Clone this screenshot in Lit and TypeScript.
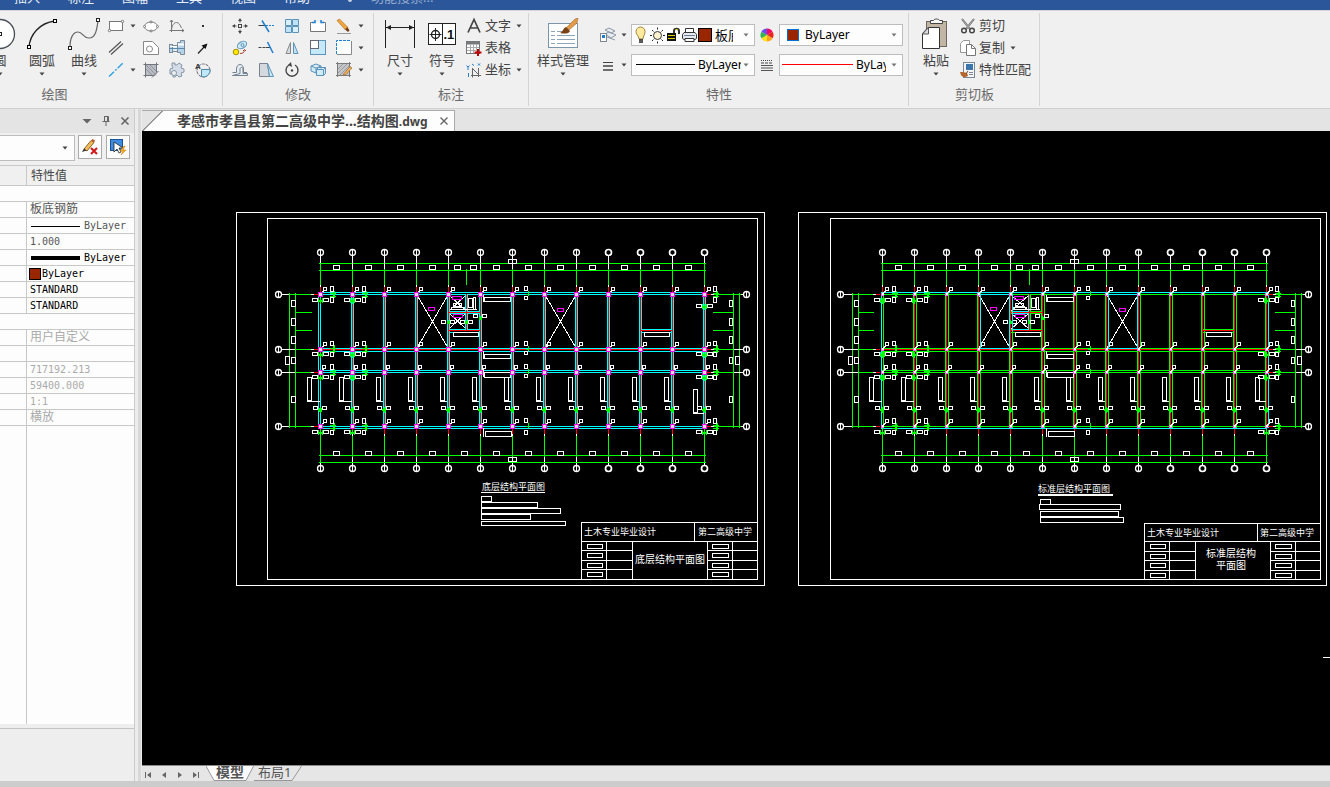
import { LitElement, html, svg, css, nothing } from "lit";
import { customElement } from "lit/decorators.js";

/* ---------- icons: 18x18 for small tools, 32x32 for large ones ---------- */

const small = (body: unknown) => html`<svg width="18" height="18" viewBox="0 0 18 18" fill="none" aria-hidden="true">${body}</svg>`;
const large = (body: unknown) => html`<svg width="32" height="32" viewBox="0 0 32 32" fill="none" aria-hidden="true">${body}</svg>`;
const caret = html`<svg class="caret" width="6" height="4" viewBox="0 0 6 4" aria-hidden="true"><path d="M.5 .5h5l-2.5 3z" fill="currentColor" /></svg>`;

const ink = "#4a4f57";
const blue = "#1f7fd0";
const pale = "#cfeaf8";
const steel = "#5d93b8";

const icons = {
  circle: large(svg`<circle cx="16" cy="16" r="14.500" stroke=${ink} stroke-width="1.300" fill="#fff"/><rect x="14.500" y="14.500" width="3" height="3" fill="#fff" stroke="#222"/>`),
  arc: large(svg`<path d="M3 29C4 17 13 5 29 3" stroke="#222" stroke-width="1.300"/><rect x="1.500" y="27.500" width="3" height="3" fill="#fff" stroke="#000"/><rect x="27.500" y="1.500" width="3" height="3" fill="#fff" stroke="#000"/>`),
  spline: large(svg`<path d="M2 29C2 20 5 14 10 14C15 14 15 20 21 20C28 20 29 10 30 3" stroke="#666" stroke-width="1.200"/><rect x=".5" y="28.500" width="3" height="3" fill="#fff" stroke="#222"/><rect x="28.500" y=".5" width="3" height="3" fill="#fff" stroke="#222"/>`),
  rect: small(svg`<rect x="2.500" y="4.500" width="13" height="9" fill="#fff" stroke="#777"/><circle cx="15.500" cy="4.500" r="1.200" fill="#fff" stroke="#777"/><circle cx="2.500" cy="13.500" r="1.200" fill="#fff" stroke="#777"/>`),
  ellipse: small(svg`<ellipse cx="9" cy="9.500" rx="6.500" ry="4.500" fill="#fff" stroke="#777"/><circle cx="2.500" cy="9.500" r="1" fill="#fff" stroke="#777"/><circle cx="15.500" cy="9.500" r="1" fill="#fff" stroke="#777"/><circle cx="9" cy="5" r="1" fill="#fff" stroke="#777"/><circle cx="9" cy="14" r="1" fill="#fff" stroke="#777"/>`),
  graph: small(svg`<path d="M3.500 3v12M1.500 13.500H16M2 5l1.500-2L5 5M14 12l2 1.500-2 1.500M3.500 13C4 8 6 5.500 8.500 5.500S12 8 13.500 11" stroke="#777"/>`),
  point: small(svg`<rect x="8" y="8" width="2" height="2" fill="#333"/>`),
  parallel: small(svg`<path d="M2 13.500L14 2.500M4 15.500L16 4.500" stroke="#555" stroke-width="1.200"/>`),
  contour: small(svg`<path d="M1.500 2.500h9l6 6v7h-15z" fill="#fff" stroke="#888"/><circle cx="7.500" cy="10" r="3" stroke="#888"/>`),
  shaft: small(svg`<rect x="1.500" y="5.500" width="3" height="8" fill="#b9d8ee" stroke="#7d8b98"/><rect x="4.500" y="6.500" width="5" height="6" fill="#dcebf6" stroke="#7d8b98"/><path d="M9.500 3.500h3v-2h4v14h-4v-2h-3z" fill="#b4d4ec" stroke="#7d8b98"/><path d="M10 5.500h6" stroke="#fff" stroke-width="2"/><path d="M2 7.500h7" stroke="#fff"/><path d="M1 9.500h16" stroke="#5c88aa"/>`),
  leader: small(svg`<path d="M4 14.500L12 6" stroke="#222" stroke-width="1.200"/><path d="M13.500 4.500L11.500 10 7.500 6.500z" fill="#111"/>`),
  dashline: small(svg`<path d="M2 15.500L16 2" stroke="#2d9fdc" stroke-width="1.400" stroke-dasharray="7 1.500 2 1.500"/>`),
  hatch: small(svg`<rect x="3.500" y="3.500" width="11" height="11" fill="#b9bdc3"/><path d="M1.500 3.500h15M1.500 14.500h11M3.500 1.500v15M14.500 1.500v10M10 16.500l6.500-6.500" stroke="#6f757d"/><path d="M4 4l9 9M8 4l6 6M4 8l6 6" stroke="#8f959d"/>`),
  gear: small(svg`<path d="M4 2h3v2h2l2-2 3 2-1 3 3 1v3l-3 1 1 3-3 1-2-2-2 2H5v-3H2V8l3-1-1-2z" fill="#d3dce8" stroke="#8796a5"/><circle cx="6" cy="12" r="2.500" fill="#f0f0f0" stroke="#8796a5"/>`),
  region: small(svg`<circle cx="9.500" cy="9.500" r="6.500" stroke="#667" stroke-dasharray="3 1"/><path d="M7.500 8.500h8.500a6.500 6.500 0 0 1-8.500 7z" fill="#bfe8fb" stroke="#4b86a8"/><text x="1" y="8" font-size="8" font-weight="700" font-family="Liberation Sans, sans-serif" fill="#333">A</text>`),
  move: small(svg`<path d="M9 1.500v4M9 12.500v4M1.500 9h4M12.500 9h4" stroke="#444"/><path d="M7 4l2-2.500L11 4zM7 14l2 2.500 2-2.500zM4 7L1.500 9 4 11zM14 7l2.500 2-2.500 2z" fill="#444"/><rect x="7.500" y="7.500" width="3" height="3" stroke="#444"/>`),
  trim: small(svg`<path d="M1.500 8.500H9" stroke="#444"/><path d="M9 8.500h8" stroke="${blue}" stroke-dasharray="2 1"/><path d="M5 3.500L12 15" stroke="${blue}" stroke-width="1.500"/>`),
  array: small(svg`<path d="M2.500 2.500h6v6h-6zM9.500 9.500h6v6h-6z" fill="#d9f0fb" stroke=${steel}/><path d="M9.500 2.500h6v6h-6zM2.500 9.500h6v6h-6z" fill="#bfe3f6" stroke=${steel}/>`),
  breakEdge: small(svg`<path d="M4.500 5.500h-3v9h15v-9h-3" fill="#fff" stroke="#777"/><path d="M3 5.500h3V3M15 5.500h-3V3" stroke=${blue} stroke-width="1.500"/>`),
  erase: small(svg`<path d="M2 16.500h14" stroke="#999"/><path d="M2 3.500L4.500 2l8 8-2.500 2.500z" fill="#f0a63c" stroke="#a9681a" stroke-width=".6"/><path d="M10 12.500l2.500-2.500 2 3.500-1.500 1.500z" fill="#7a3d16"/>`),
  copyTo: small(svg`<ellipse cx="11" cy="6" rx="5" ry="3.200" transform="rotate(-30 11 6)" fill=${pale} stroke=${steel}/><circle cx="11.500" cy="6" r="1.500" stroke=${steel}/><circle cx="5" cy="13" r="2.800" fill="#ffe600" stroke="#a89300"/><path d="M9 14.500c3 0 4-1 4.500-3M12 12l1.500-1.500L15 12" stroke="#b03a2e"/>`),
  extend: small(svg`<path d="M1.500 8.500H9" stroke="#444" stroke-dasharray="3 1"/><path d="M9 8.500h4" stroke="#444"/><path d="M10.500 3L16 14" stroke=${blue} stroke-width="1.500"/>`),
  mirror: small(svg`<path d="M7.500 3.500v11H3z" fill="#d7dbe0" stroke="#888"/><path d="M10.500 3.500v11H15z" fill="#bfe3f6" stroke=${steel}/>`),
  scale: small(svg`<rect x="1.500" y="1.500" width="15" height="14" fill="#c6e9fa" stroke=${steel}/><rect x="1.500" y="1.500" width="8" height="8" fill="#fff" stroke="#667"/>`),
  dashedRect: small(svg`<rect x="2" y="2" width="14" height="13" fill="#fff"/><path d="M1.500 15V1.500H16" stroke=${blue} stroke-dasharray="3 1"/><path d="M16.500 2v13.500H2" stroke="#888"/>`),
  offset: small(svg`<path d="M1.500 11.500h4V8c0-6 7-6 7 0v3.500h3.500M1.500 14.500h15v-2h-4.500V8c0-2-3-2-3 0v4.500z" fill="#e4edf4" stroke="#73818f"/>`),
  chamfer: small(svg`<path d="M2.500 2.500h8l2 13h-10z" fill="#d5d9de" stroke="#7b838c"/><path d="M10.500 2.500l6 13h-4z" fill="#c6e9fa" stroke=${steel}/>`),
  rotate: small(svg`<path d="M6 4A6 6 0 1 0 12 4" stroke="#444" stroke-width="1.400"/><path d="M8 1l-3 3 4 2z" fill="#444"/><circle cx="9" cy="9.500" r="1.200" fill="#444"/>`),
  blocks: small(svg`<path d="M2 5l5-2 5 2v5l-5 2-5-2zM2 5l5 2 5-2M7 7v5" fill=${pale} stroke=${steel}/><path d="M7.500 8.500l2-2h7v6l-2 2h-7zM7.500 8.500h7l2-2M14.500 8.500v6" fill=${pale} stroke=${steel}/>`),
  hatchEdit: small(svg`<rect x="2.500" y="2.500" width="12" height="12" fill="#c4c6c9"/><path d="M1 2.500h15M1 14.500h15M2.500 1v15M14.500 1v15" stroke="#7a7a7a"/><path d="M3 8l5-5M3 12l9-9M5 14l9-9" stroke="#9a9a9a"/><path d="M9 12.500l6-7 2 1.500-6 6.500-3 1z" fill="#f2b25a" stroke="#8a5a22" stroke-width=".6"/>`),
  dimension: large(svg`<path d="M1.500 2v28M30.500 2v28M2 9.500h28" stroke="#222"/><path d="M2 9.500l5-2.500v5zM30 9.500l-5-2.500v5z" fill="#222"/>`),
  symbol: large(svg`<rect x="2.500" y="5.500" width="27" height="21" fill="#fff" stroke="#222"/><path d="M16.500 5.500v21M3.500 16.500h12M9.500 10v13" stroke="#222"/><circle cx="9.500" cy="16.500" r="4" stroke="#222" stroke-width="1.400"/><text x="17.500" y="21" font-size="13" font-weight="700" font-family="Liberation Sans, sans-serif" fill="#111">.1</text>`),
  letter: small(svg`<path d="M3 15.500L9 2.500l6 13M5.500 11h7" stroke="#444" stroke-width="1.700"/>`),
  grid: small(svg`<rect x="1.500" y="2.500" width="13" height="12" fill="#fff" stroke="#777"/><rect x="1.500" y="2.500" width="13" height="3" fill="#77797c"/><path d="M2 8.500h12M2 11.500h12M5.500 5v9M8.500 5v9M11.500 5v9" stroke="#aaa"/><path d="M13 10v7M9.500 13.500h7" stroke="#c00000" stroke-width="2"/>`),
  coords: small(svg`<path d="M7.500 7v9.500M6 14.500h10M8 8l5 5M13.500 7v9" stroke="#666"/><path d="M3 6v3M1.500 4.500L3 6l1.500-1.500M3.500 12v4M7 3l2 1.500M13 2.500l2 2M15 2.500l-2 2" stroke=${blue}/>`),
  styles: large(svg`<rect x="1.500" y="5.500" width="29" height="24" fill="#fff" stroke="#7b95ab"/><path d="M4 13.500h4M10 13.500h8M4 17.500h4M10 17.500h18M4 21.500h4M10 21.500h18M4 25.500h4M10 25.500h18" stroke="#8fa3bb"/><path d="M28 1l3-1-1 5-8 7-3-2z" fill="#e09a4a" stroke="#9a5b1c" stroke-width=".5"/><path d="M19 9l4 4c-1 3-6 3-10 2 3-1 3-5 6-6z" fill="#7b4218"/>`),
  layers: small(svg`<path d="M6 4l4-2 6 3-4 2zM6 8l4-2 7 3-5 3zM8 11l8 3" fill="#e8ecf0" stroke="#8d97a2"/><rect x="1.500" y="7.500" width="6" height="8" fill="#fff" stroke="#7d8894"/><rect x="3" y="9" width="3" height="3" fill=${blue}/>`),
  weights: small(svg`<path d="M4 6.500h10" stroke="#444"/><path d="M4 10h10M4 14h10" stroke="#444" stroke-width="1.500"/>`),
  wheel: small(svg`<path d="M9 9V2.500a6.500 6.500 0 0 1 5.600 3.200z" fill="#f06"/><path d="M9 9l5.600-3.300a6.500 6.500 0 0 1 0 6.600z" fill="#e8261c"/><path d="M9 9l5.600 3.300A6.500 6.500 0 0 1 9 15.500z" fill="#ffa51f"/><path d="M9 9v6.500a6.500 6.500 0 0 1-5.600-3.200z" fill="#ffe11a"/><path d="M9 9l-5.600 3.300a6.500 6.500 0 0 1 0-6.600z" fill="#34b54a"/><path d="M9 9L3.400 5.700A6.500 6.500 0 0 1 9 2.500z" fill="#6a4be8"/>`),
  lineTypes: small(svg`<path d="M3 4.500h12" stroke="#444" stroke-dasharray="1 1"/><path d="M3 7h12" stroke="#444" stroke-dasharray="3 1"/><path d="M3 9.500h12M3 12h12M3 14.500h12" stroke="#555"/>`),
  paste: large(svg`<rect x="6.500" y="3.500" width="20" height="25" fill="#c1b5a6" stroke="#6f675e"/><path d="M10.500 5.500v-3h3c1-2 5-2 6 0h3v3z" fill="#f8f8f8" stroke="#444"/><path d="M8 9.500h11.500v21h-17v-15z" fill="#fff" stroke="#333"/><path d="M8.500 9.500v6.500h-6z" fill="#d9dde2" stroke="#555"/>`),
  cut: small(svg`<path d="M3 2l8 10M15 2L7 12" stroke="#555" stroke-width="2"/><path d="M3 2l8 10M15 2L7 12" stroke="#ddd" stroke-width=".7"/><circle cx="5" cy="13.500" r="2.300" stroke="#444" stroke-width="1.500"/><circle cx="13" cy="13.500" r="2.300" stroke="#444" stroke-width="1.500"/>`),
  copy: small(svg`<path d="M4.500 1.500h6v12h-9v-9z" fill="#fff" stroke="#999"/><path d="M7.500 5.500h5l4 4v7h-9z" fill="#fff" stroke="#777"/><path d="M12.500 5.500v4h4" stroke="#777"/>`),
  match: small(svg`<rect x="4.500" y="1.500" width="11" height="15" fill="#f4f6f8" stroke="#7b8894"/><rect x="7" y="3" width="7" height="6" fill="#3d76ad"/><path d="M10 11.500h4M10 13.500h4" stroke="#7b8894"/><path d="M1 11c3 0 4 0 7 1l1 3c-3 2-6 1-7-1z" fill="#b5672b"/><path d="M7 13l2-3" stroke="#7b4218"/>`),
  bulb: html`<svg width="15" height="18" viewBox="0 0 15 18" fill="none"><path d="M5 13c0-3-3-4-3-7.500A4.500 4.500 0 0 1 11 5.500C11 9 9 10 9 13z" fill="#ffeaa0" stroke="#9c8440"/><path d="M5 14h4M5 16h4" stroke="#222" stroke-width="1.500"/></svg>`,
  sun: html`<svg width="17" height="18" viewBox="0 0 17 18" fill="none"><circle cx="8.500" cy="9.500" r="4" fill="#fff3cf" stroke="#333"/><path d="M8.500 1.500v2M8.500 15.500v2M1 9.500h2M14 9.500h2M3 4l1.500 1.500M12.500 13.500L14 15M14 4l-1.500 1.500M4.500 13.500L3 15" stroke="#222"/></svg>`,
  lock: html`<svg width="15" height="18" viewBox="0 0 15 18" fill="none"><path d="M8 8V5c0-3 5-3 5 0v3" stroke="#333" stroke-width="2"/><path d="M9.500 3.500h2" stroke="#f2e600"/><rect x="1" y="7" width="9" height="8" fill="#111"/><path d="M2 9.500h7M2 12.500h7" stroke="#d9cf00"/></svg>`,
  printer: html`<svg width="17" height="18" viewBox="0 0 17 18" fill="none"><path d="M4.500 7V2.500h8V7" fill="#fff" stroke="#333"/><path d="M3 6.500h11l1.500 2v4l-1.500 1H3l-1.500-1v-4z" fill="#e6eaf0" stroke="#333"/><path d="M4 12.500h9v3H4z" fill="#fff" stroke="#333"/><path d="M3 9.500h11" stroke="#6d7f95"/></svg>`,
};

/* ---------- floor plan drawing ---------- */

type Ink = "diag" | "cyan" | "green" | "red" | "magenta" | "mark" | "white";
const order: Ink[] = ["diag", "cyan", "green", "red", "magenta", "mark", "white"];
const colours: Record<Ink, string> = { diag: "#ffffff", cyan: "#00ffff", green: "#00ff00", red: "#ff0000", magenta: "#ff00ff", mark: "#00ff00", white: "#ffffff" };

class Pen {
  paths: Record<Ink, string> = { diag: "", cyan: "", green: "", red: "", magenta: "", mark: "", white: "" };
  h(c: Ink, x1: number, x2: number, y: number) { this.paths[c] += `M${x1} ${y + 0.5}H${x2 + 1}`; }
  v(c: Ink, x: number, y1: number, y2: number) { this.paths[c] += `M${x + 0.5} ${y1}V${y2 + 1}`; }
  box(c: Ink, x1: number, y1: number, x2: number, y2: number) { this.paths[c] += `M${x1 + 0.5} ${y1 + 0.5}H${x2 + 0.5}V${y2 + 0.5}H${x1 + 0.5}Z`; }
  cross(x1: number, y1: number, x2: number, y2: number) { this.paths.diag += `M${x1} ${y1}L${x2} ${y2}M${x2} ${y1}L${x1} ${y2}`; }
  line(x1: number, y1: number, x2: number, y2: number) { this.paths.white += `M${x1} ${y1}L${x2} ${y2}`; }
}

const rowsY = [294, 349, 372, 426];

function plan(x0: number, ground: boolean) {
  const p = new Pen();
  const col = (i: number) => x0 + 32 * i;
  const end = col(12);
  const wall: Ink = ground ? "cyan" : "green";
  const left = ground ? x0 : x0 + 1;

  // sheet frames
  p.box("white", x0 - 84, 212, end + 60, 585);
  p.box("white", ground ? x0 - 53 : x0 - 52, 218, end + (ground ? 53 : 54), 579);

  // walls along the rows
  p.h("cyan", x0 - 1, end + 1, 292);
  p.h(wall, x0 - 1, end, 294);
  p.h(wall, x0, end, 348);
  p.h("red", x0, end, 349);
  p.h(wall, x0, end, 351);
  p.h(wall, x0, end, 370);
  p.h(wall, x0, end, 372);
  p.h(wall, x0, end, 426);
  p.h("cyan", x0, end, 428);

  // walls along the columns
  for (let i = 0; i <= 12; i++) {
    const c = col(i);
    if (i === 0) {
      p.v("cyan", ground ? c - 2 : c - 1, 293, 428);
      p.v(wall, ground ? c : c + 1, 293, 428);
    } else {
      p.v(wall, c - 1, 293, 427);
      p.v(!ground && i === 12 ? "cyan" : wall, ground ? c + 1 : c + 2, 293, 427);
      p.v("red", c, 293, 427);
    }
  }

  // top and bottom dimension chains
  for (const y of [263, 270, 455, 462]) p.h("mark", x0 - 1, end + 1, y);
  for (let i = 0; i <= 12; i++) {
    const c = col(i);
    const edge = i === 0 || i === 12;
    p.v("white", c, 255, edge ? 262 : 268);
    p.v("mark", c, edge ? 263 : 269, 284);
    p.v("white", c, 285, 286);
    p.v("red", c, 287, 291);
    p.v(edge ? "mark" : "red", c, 429, 433);
    if (!edge) p.v("white", c, 434, 435);
    p.v("mark", c, 436, 456);
    p.v(edge ? "mark" : "white", c, 457, 461);
    p.v("white", c, 463, 465);
    if (i < 12) {
      if (i === 4) {
        p.box("white", c + 6, 265, c + 12, 269);
        p.box("white", c + 22, 265, c + 28, 269);
        p.v("mark", c + (ground ? 18 : 19), 269, 284);
      } else p.box("white", c + 13, 265, c + 19, 269);
      p.box("white", c + 13, 451, c + 19, 455);
    }
  }
  p.box("white", col(6) - 4, 259, col(6) + 4, 263);
  p.box("white", col(6) - 4, 457, col(6) + 4, 461);

  // side dimension chains
  for (const x of [left - 31, left - 25, end + 29, end + 35]) p.v("green", x, 293, 427);
  rowsY.forEach((y, k) => {
    const outer = k === 0 || k === 3;
    p.h("white", x0 - 39, outer ? left - 32 : left - 26, y);
    p.h("green", outer ? left - 31 : left - 25, x0 - 10, y);
    p.h("white", x0 - 9, x0 - 7, y);
    p.h("red", x0 - 6, x0 - 3, y);
    p.h("red", end + 2, end + 6, y);
    p.h("white", end + 7, end + 9, y);
    p.h("green", end + 10, outer ? end + 36 : end + 29, y);
    p.h("white", outer ? end + 37 : end + 30, end + 39, y);
  });
  for (const y of [312, 330]) {
    p.h("green", left - 25, x0 - 9, y);
    p.h("green", end + 9, end + 29, y);
  }
  for (const [y1, y2] of [[300, 306], [318, 325], [336, 343], [357, 363], [396, 402]]) {
    p.box("white", left - 29, y1, left - 25, y2);
    p.box("white", end + 25, y1, end + 28, y2);
  }
  p.box("white", left - 35, 356, left - 31, 364);
  p.box("white", end + 31, 356, end + 35, 364);

  // node labels
  const tagY = [287, 342, 365, 419];
  const above = [[286, 291], [341, 345], [364, 369], [418, 423]];
  const below = [[297, 302], [352, 356], [375, 379], [430, 434]];
  const flat = [[298, 301], [352, 355], [375, 378], [430, 433]];
  for (let k = 0; k < 4; k++) {
    for (let i = 0; i <= 12; i++) {
      const c = col(i);
      const dx = k === 2 ? 2 : 3;
      p.box("white", c + dx, tagY[k], c + dx + 3, tagY[k] + 3);
      if (!ground) p.line(c + 1, rowsY[k] - 1, c + 4, tagY[k] + 4);
      else p.h("white", c + 2, c + 3, tagY[k] + 4);
    }
    for (const i of [0, 1, 12]) {
      const c = col(i);
      const vx = i === 12 ? c + 9 : c + 10;
      p.box("white", vx, above[k][0], vx + 3, above[k][1]);
      p.box("white", vx, below[k][0], vx + 3, below[k][1]);
      p.v("mark", vx + 4, above[k][1], below[k][0]);
      p.v("mark", vx + 3, above[k][1] + 1, below[k][0] - 1);
      p.h("mark", vx, vx + 5, rowsY[k] - 1);
      p.h("mark", vx, vx + 5, rowsY[k] + 2);
      const drop = i === 12 && k === 0 && ground ? 6 : 0;
      const fy = flat[k][0] + drop;
      p.box("white", c - 8, fy, c - 3, fy + 3);
      p.box("white", c + 3, fy, c + 8, fy + 3);
      p.v("mark", c - 2, fy, fy + 4);
      p.v("mark", c, fy, fy + 5);
      p.v("mark", c + 2, fy, fy + 4);
      p.h("mark", c - 2, c + 3, fy + 2);
      p.h("mark", c - 2, c + 3, fy + 3);
    }
    const m = col(6) + 12;
    p.box("white", m, above[k][0], m + 3, above[k][0] + 4);
    p.box("white", m, rowsY[k] + (k === 3 ? 4 : 2), m + 3, rowsY[k] + (k === 3 ? 8 : 5));
    p.v("mark", m + 4, rowsY[k] - 3, rowsY[k] + 1);
    p.h("mark", m + 2, m + 4, rowsY[k]);
  }

  // beam marks in the lower bay
  for (let i = 0; i <= 12; i++) {
    const c = col(i);
    const low = i === 12 && ground ? 12 : 0;
    const wide = i < 2 || i === 12;
    const bx = wide ? c - (i === 12 ? 11 : 13) : c - 8;
    p.box("white", bx, 377 + low, bx + 4, 400 + low);
    p.h("white", bx, wide ? c - 1 : c - 2, 401 + low);
    p.box("white", c - 7, 406, c - 3, 409);
    p.box("white", c + 2, 406, c + 6, 409);
    p.v("mark", c - 2, 409, 410);
    p.v("mark", c - 1, 408, 411);
    p.v("mark", c, 407, 412);
    p.v("mark", c + 1, 408, 411);
  }

  // slab marks
  const s = ground ? col(5) + 4 : col(5) + 5;
  p.box("white", s, 297, s + 26, 301);
  p.box("white", s, 354, s + 26, 358);
  p.box("white", s, 372, s + 26, 377);
  p.box("white", s + 1, 431, s + 27, 436);
  for (const [y1, y2] of [[295, 301], [351, 358], [370, 376], [428, 436]]) p.v("white", s - 1, y1, y2);
  p.cross(col(3) + 1, 295, col(4), 348);
  p.cross(col(7) + 1, 295, col(8), 348);
  p.box("magenta", col(3) + 12, 307, col(3) + 18, 310);
  p.box("magenta", col(7) + 13, 308, col(7) + 19, 311);

  // stair core
  const c4 = col(4);
  const mid = c4 + (ground ? 18 : 19);
  p.cross(c4 + 1, 295, mid, 311);
  p.cross(c4 + 1, 313, mid, 329);
  p.v("cyan", mid - 1, 294, 330);
  p.v(wall, mid + 1, 294, 330);
  p.v("red", mid, 294, 330);
  for (const [a, b, y] of [[c4, c4 + 32, 312], [c4, c4 + 32, 330], [col(10), col(11), 330]]) {
    p.h(wall, a + 1, b - 1, y - 1);
    p.h(wall, a + 1, b - 1, y + (y === 312 ? 1 : 2));
    p.h("red", a, b, y);
  }
  p.box("white", c4 + 5, 332, c4 + 30, 336);
  p.box("white", col(10) + 4, 332, col(10) + 29, 336);
  p.box("magenta", c4 + 4, 296, c4 + 13, 299);
  p.box("magenta", c4 + 5, 314, c4 + 14, 317);
  p.box("white", c4 + 5, 303, c4 + 13, 306);
  p.box("white", c4 + 3, 307, c4 + 16, 309);
  p.box("white", mid + 2, 298, mid + 6, 307);
  p.box("white", mid + 7, 297, mid + 9, 309);
  p.h("white", mid - 2, mid + 10, 309);
  for (const dx of [-7, 2, 12, 20]) p.box("white", c4 + dx, 320, c4 + dx + 4, 323);
  p.box("white", c4 + 25, 314, c4 + 29, 317);
  p.box("white", c4 + 34, 314, c4 + 38, 317);
  for (const [x, y] of [[c4, 320], [mid, 320], [c4 + 32, 316]]) {
    p.v("mark", x - 1, y + 1, y + 3);
    p.v("mark", x, y, y + 3);
    p.v("mark", x + 1, y + 1, y + 3);
  }

  // openings framed in the upper floor
  const frames = new Pen();
  if (!ground) {
    for (const i of [3, 7]) {
      frames.v("cyan", col(i) + 2, 294, 347);
      frames.v("cyan", col(i + 1) - 1, 294, 347);
      frames.h("cyan", col(i) + 2, col(i + 1) - 1, 294);
      frames.h("cyan", col(i) + 2, col(i + 1) - 1, 348);
    }
    frames.v("cyan", c4 + 2, 294, 330);
    frames.h("cyan", c4 + 2, mid - 1, 311);
    frames.h("cyan", c4 + 2, mid - 1, 313);
    frames.h("cyan", c4 + 2, mid - 1, 329);
  }

  const bubble = (cx: number, cy: number, thick: boolean) => svg`
    <circle cx=${cx + 0.5} cy=${cy + 0.5} r="3" fill="#000" stroke="#fff" stroke-width=${thick ? 1.7 : 1.3} />
    ${thick ? nothing : svg`<path d="M${cx + 0.5} ${cy - 2}v5" stroke="#fff" />`}`;
  const bubbles: unknown[] = [];
  for (let i = 0; i <= 12; i++) bubbles.push(bubble(col(i), 252, i > 8), bubble(col(i), 468, i > 8));
  for (const y of rowsY) bubbles.push(bubble(x0 - 42, y, false), bubble(end + 42, y, false));

  const nodes: unknown[] = [];
  for (let i = 0; i <= 12; i++) {
    for (const y of rowsY) {
      const c = col(i);
      nodes.push(ground
        ? svg`<rect x=${c - 1.5} y=${y - 1.5} width="4" height="4" fill="#dcdcdc" stroke="#ff00ff" />`
        : svg`<path d="M${c - 1} ${y - 1}h3v3h-3z" fill="#ff66ff" /><path d="M${c} ${y - 1}h2v2h-2z" fill="#fff" />`);
    }
  }

  return svg`
    ${order.map((k) => svg`<path d=${p.paths[k]} stroke=${colours[k]} fill="none" />`)}
    <path d=${frames.paths.cyan} stroke=${colours.cyan} fill="none" />
    ${nodes}<g shape-rendering="auto">${bubbles}</g>`;
}

function titleBlock(x: number, top: number, lines: number[]) {
  const p = new Pen();
  const right = x + 176;
  p.h("white", x, right, top);
  p.h("white", x, right, 541);
  p.v("white", x, top, 579);
  p.v("white", x + 113, top, 541);
  for (const dx of [25, 51, 126, 151]) p.v("white", x + dx, 541, 579);
  for (const y of lines) {
    p.h("white", x, x + 51, y);
    p.h("white", x + 126, right, y);
  }
  for (const y of [541, ...lines]) {
    p.box("white", x + 6, y + 3, x + 21, y + 7);
    p.box("white", x + 131, y + 3, x + 147, y + 7);
  }
  return svg`<path d=${p.paths.white} stroke="#fff" fill="none" />`;
}

function notes(boxes: number[][]) {
  const p = new Pen();
  for (const [x1, y1, x2, y2] of boxes) p.box("white", x1, y1, x2, y2);
  return svg`<path d=${p.paths.white} stroke="#fff" fill="none" />`;
}

@customElement("plan-canvas")
export class PlanCanvas extends LitElement {
  static styles = css`
    :host { display: block; overflow: hidden; background: #000; }
    svg { display: block; }
    .note { font: 9px "Noto Sans CJK SC", sans-serif; fill: #fff; }
    .name { font: 10px "Noto Sans CJK SC", sans-serif; fill: #fff; text-anchor: middle; }
  `;
  render() {
    return html`<svg width="1188" height="634" viewBox="142 131 1188 634" shape-rendering="crispEdges" role="img" aria-label="结构平面图">
      ${plan(320, true)} ${plan(882, false)}
      ${titleBlock(581, 522, [550, 560, 569])} ${titleBlock(1144, 523, [551, 560, 570])}
      ${notes([[481, 496, 491, 501], [481, 502, 537, 507], [481, 508, 560, 513], [481, 514, 530, 519], [481, 521, 565, 525]])}
      ${notes([[1040, 499, 1050, 504], [1039, 504, 1120, 509], [1040, 511, 1118, 516], [1040, 517, 1123, 522]])}
      <path d="M481 492.500h64M1038 494.500h75M1038 495.500h75M1323 657.500h7" stroke="#fff" />
      <text class="note" x="482" y="490">底层结构平面图</text>
      <text class="note" x="1038" y="492">标准层结构平面图</text>
      <text class="note" x="584" y="535">土木专业毕业设计</text>
      <text class="note" x="698" y="535">第二高级中学</text>
      <text class="name" x="670" y="563">底层结构平面图</text>
      <text class="note" x="1147" y="536">土木专业毕业设计</text>
      <text class="note" x="1260" y="536">第二高级中学</text>
      <text class="name" x="1231" y="557">标准层结构</text>
      <text class="name" x="1231" y="569">平面图</text>
    </svg>`;
  }
}

/* ---------- property rows ---------- */

type Row = { value?: unknown; tone?: "dark" | "dim"; section?: boolean };
const rows: Row[] = [
  { section: true },
  { value: "板底钢筋" },
  { value: html`<span class="thin-line"></span>ByLayer` },
  { value: "1.000" },
  { value: html`<span class="bold-line"></span>ByLayer`, tone: "dark" },
  { value: html`<span class="chip"></span>ByLayer`, tone: "dark" },
  { value: "STANDARD", tone: "dark" },
  { value: "STANDARD", tone: "dark" },
  { section: true },
  { value: "用户自定义", tone: "dim" },
  { value: "", tone: "dim" },
  { value: "717192.213", tone: "dim" },
  { value: "59400.000", tone: "dim" },
  { value: "1:1", tone: "dim" },
  { value: "横放", tone: "dim" },
];

@customElement("app-root")
export class AppRoot extends LitElement {
  static styles = css`
    :host { display: flex; flex-direction: column; height: 100vh; overflow: hidden; background: #f0f0f0; color: #444; font: 13px/20px "Noto Sans", "Noto Sans CJK SC", sans-serif; }
    * { box-sizing: border-box; }
    svg { display: block; flex: none; }
    button, select { font: inherit; color: inherit; background: none; border: 0; padding: 0; margin: 0; border-radius: 0; }
    a { color: inherit; text-decoration: none; }

    .menu { flex: none; display: flex; align-items: flex-end; gap: 28px; height: 10px; padding: 0 0 5px 14px; overflow: hidden; background: #2b579a; color: #e8eef6; line-height: 16px; }
    .menu .hint { display: flex; align-items: center; gap: 19px; margin-left: 10px; color: #93aace; }
    .hint .lamp { width: 4px; height: 10px; background: #c9d3e2; border-radius: 2px; }

    .ribbon { flex: none; display: flex; height: 99px; border-top: 1px solid #d6d6d6; border-bottom: 1px solid #d0d0d0; overflow: hidden; }
    .group { flex: none; display: flex; flex-direction: column; border-right: 1px solid #d4d4d4; margin: 2px 0; }
    .group-body { display: flex; height: 71px; }
    .group h2 { margin: 0; font-size: 13px; font-weight: 400; line-height: 20px; text-align: center; color: #6a6a6a; }
    .g-draw { width: 334px; margin-left: -111px; }
    .g-draw h2 { margin-right: 2px; }
    .g-draw .group-body { justify-content: flex-end; padding-right: 10px; }
    .g-modify { padding-left: 8px; width: 151px; }
    .g-modify h2 { margin-right: 8px; }
    .g-note { padding-left: 5px; width: 155px; }
    .g-note h2 { margin-right: 5px; }
    .g-props { padding-left: 6px; width: 380px; }
    .g-props h2 { margin-right: 5px; }
    .g-clip { padding-left: 6px; width: 131px; }
    .g-clip h2 { margin-right: 5px; }

    .big { display: flex; flex-direction: column; align-items: center; width: 42px; padding-top: 5px; white-space: nowrap; }
    .big.wide { width: 56px; }
    .big .caret { margin-top: 2px; }
    .tools { display: grid; grid-auto-rows: 22px; column-gap: 8px; padding-top: 2px; }
    .tools.draw { grid-template-columns: 27px 18px 18px 18px; margin-left: 2px; }
    .tools.modify { grid-template-columns: 18px 18px 18px 18px 34px; }
    .tools.labels { margin-left: 2px; }
    .tool { display: flex; align-items: center; white-space: nowrap; }
    .tool .caret { margin-left: 5px; }
    .tool span { margin-left: 2px; padding-bottom: 2px; }

    .combos { display: grid; grid-template-columns: 18px 14px 124px 24px 124px; grid-auto-rows: 21px; row-gap: 9px; padding-top: 11px; margin-left: 8px; align-items: center; justify-items: center; }
    .combo { display: flex; align-items: center; width: 124px; height: 22px; padding: 0 5px 0 2px; border: 1px solid #bdbdbd; background: #fdfdfd; color: #777; }
    .combo select { flex: 1 1 0; min-width: 0; height: 20px; appearance: none; font-size: 12px; line-height: 18px; color: #000; margin-right: 2px; outline: none; }
    .combo select.layer { font-size: 13px; margin-right: 10px; }
    .combo .stroke.hot + select { margin-right: 5px; }
    .swatch { flex: none; width: 14px; height: 14px; margin: 1px 3px 0 0; background: #992600; border: 1px solid #000; }
    .swatch.select { width: 12px; height: 12px; margin: 0 6px 0 5px; border: 1px solid #0070d8; }
    .stroke { flex: none; width: 59px; height: 1px; margin: 0 3px 0 2px; background: #000; }
    .stroke.hot { width: 71px; margin-left: 0; background: #f00; }

    .work { flex: 1; display: flex; min-height: 0; }
    .panel { flex: none; display: flex; flex-direction: column; width: 135px; overflow: hidden; }
    .panel-title { display: flex; align-items: center; justify-content: flex-end; gap: 10px; height: 24px; padding-right: 5px; background: #e4e4e4; color: #666; }
    .finder { display: flex; height: 32px; padding: 2px 5px 0 0; }
    .finder .pick { display: flex; align-items: center; justify-content: flex-end; flex: 1; height: 26px; margin-right: 3px; padding-right: 6px; border: 1px solid #bdbdbd; border-left: 0; background: #fdfdfd; }
    .pick select { flex: 1; height: 24px; appearance: none; }
    .finder button { display: grid; place-items: center; width: 24px; height: 24px; border: 1px solid #aaa; background: #fdfdfd; }
    .finder button + button { margin-left: 4px; }
    .sheet { flex: 1; display: flex; flex-direction: column; min-height: 0; margin-right: 1px; background: #fdfdfd; border-top: 1px solid #c8c8c8; }
    table { border-collapse: separate; border-spacing: 0; table-layout: fixed; width: 100%; }
    th, td { height: 16px; padding: 0; border-bottom: 1px solid #c8c8c8; text-align: left; font-weight: 400; overflow: hidden; white-space: nowrap; line-height: 15px; }
    tbody th { font-size: 0; border-right: 1px solid #c8c8c8; }
    tbody td { font: 10px/15px "DejaVu Sans Mono", "Noto Sans CJK SC", monospace; padding-left: 3px; color: #555; }
    tbody td.cjk { font-size: 12px; }
    tbody td.dark { color: #000; }
    tbody td.dim { color: #aaa; }
    .c-name { width: 27px; }
    thead th { height: 20px; background: #f0f0f0; font-size: 12px; padding-left: 4px; }
    thead th:first-child { border-right: 1px solid #c8c8c8; }
    .thin-line, .bold-line { display: inline-block; vertical-align: middle; width: 49px; height: 1px; margin: 0 4px 0 1px; background: #000; }
    .bold-line { height: 4px; }
    .chip { display: inline-block; vertical-align: middle; width: 12px; height: 12px; margin: 0 1px 0 -1px; background: #992600; border: 1px solid #000; }
    .rest { flex: 1; width: 27px; border-right: 1px solid #c8c8c8; }
    .describe { height: 57px; margin-right: 1px; padding-top: 4px; background: #eee; }
    .describe::before { content: ""; display: block; height: 1px; background: #c4c4c4; }
    .splitter { flex: none; width: 7px; background: #d8d8d8; border-left: 3px solid #ececec; border-right: 1px solid #ececec; box-shadow: -1px 0 #ccc; }

    .main { flex: 1; display: flex; flex-direction: column; min-width: 0; }
    .tabs { flex: none; display: flex; height: 22px; padding-top: 1px; background: #e4e4e4; }
    .doc-tab { display: flex; align-items: center; gap: 12px; height: 21px; padding: 0 6px 0 35px; font-size: 14px; font-weight: 700; line-height: 18px; background: linear-gradient(135deg, #e4e4e4 14px, #999 14px, #999 15px, #fdfdfd 15px); border-top: 1px solid #aaa; border-right: 1px solid #aaa; white-space: nowrap; }
    .doc-tab .ext { font-size: 12px; }
    plan-canvas { flex: 1; min-height: 0; }
    .layouts { flex: none; display: flex; height: 16px; border-top: 1px solid #8a8a8a; background: #e6e6e6; color: #555; }
    .steps { display: flex; align-items: center; gap: 6px; padding: 2px 5px 0 1px; }
    .steps button { width: 10px; height: 8px; display: grid; place-items: center; }
    .layouts a { position: relative; height: 15px; line-height: 12px; overflow: hidden; }
    .layouts a span { position: relative; }
    .layouts a svg { position: absolute; left: 0; top: 0; }
    .layouts .model { width: 48px; padding-left: 10px; font-weight: 700; font-size: 14px; }
    .layouts .paper { width: 54px; padding-left: 4px; }
    .foot { flex: none; height: 6px; background: #ccc; }
  `;

  private big(icon: unknown, label: string, wide = false) {
    return html`<button class="big ${wide ? "wide" : ""}" type="button">${icon}<span>${label}</span>${caret}</button>`;
  }

  private tool(icon: unknown, name: string, drop = false, text = false) {
    return html`<button class="tool" type="button" aria-label=${name}>${icon}${text ? html`<span>${name}</span>` : nothing}${drop ? caret : nothing}</button>`;
  }

  render() {
    const i = icons;
    return html`
      <nav class="menu">
        ${["插入", "标注", "图幅", "工具", "视图", "帮助"].map((t) => html`<a href="#">${t}</a>`)}
        <span class="hint"><span class="lamp"></span>功能搜索...</span>
      </nav>

      <header class="ribbon">
        <section class="group g-draw">
          <div class="group-body">
            ${this.big(i.circle, "圆")}${this.big(i.arc, "圆弧")}${this.big(i.spline, "曲线")}
            <div class="tools draw">
              ${this.tool(i.rect, "矩形", true)}${this.tool(i.ellipse, "椭圆")}${this.tool(i.graph, "公式曲线")}${this.tool(i.point, "点")}
              ${this.tool(i.parallel, "平行线")}${this.tool(i.contour, "局部放大图")}${this.tool(i.shaft, "孔轴")}${this.tool(i.leader, "箭头")}
              ${this.tool(i.dashline, "中心线", true)}${this.tool(i.hatch, "剖面线")}${this.tool(i.gear, "齿形")}${this.tool(i.region, "圆弧拟合")}
            </div>
          </div>
          <h2>绘图</h2>
        </section>

        <section class="group g-modify">
          <div class="group-body">
            <div class="tools modify">
              ${this.tool(i.move, "平移")}${this.tool(i.trim, "裁剪")}${this.tool(i.array, "阵列")}${this.tool(i.breakEdge, "打断")}${this.tool(i.erase, "删除", true)}
              ${this.tool(i.copyTo, "平移复制")}${this.tool(i.extend, "延伸")}${this.tool(i.mirror, "镜像")}${this.tool(i.scale, "缩放")}${this.tool(i.dashedRect, "拉伸", true)}
              ${this.tool(i.offset, "等距线")}${this.tool(i.chamfer, "过渡")}${this.tool(i.rotate, "旋转")}${this.tool(i.blocks, "分解")}${this.tool(i.hatchEdit, "编辑剖面线", true)}
            </div>
          </div>
          <h2>修改</h2>
        </section>

        <section class="group g-note">
          <div class="group-body">
            ${this.big(i.dimension, "尺寸")}${this.big(i.symbol, "符号")}
            <div class="tools labels">
              ${this.tool(i.letter, "文字", true, true)}${this.tool(i.grid, "表格", false, true)}${this.tool(i.coords, "坐标", true, true)}
            </div>
          </div>
          <h2>标注</h2>
        </section>

        <section class="group g-props">
          <div class="group-body">
            ${this.big(i.styles, "样式管理", true)}
            <div class="combos">
              ${i.layers}${caret}
              <div class="combo">${i.bulb}${i.sun}${i.lock}${i.printer}<span class="swatch"></span>
                <select class="layer" aria-label="图层"><option>板底钢筋</option></select>${caret}</div>
              ${i.wheel}
              <div class="combo"><span class="swatch select"></span><select aria-label="颜色"><option>ByLayer</option></select>${caret}</div>
              ${i.weights}${caret}
              <div class="combo"><span class="stroke"></span><select aria-label="线型"><option>ByLayer</option></select>${caret}</div>
              ${i.lineTypes}
              <div class="combo"><span class="stroke hot"></span><select aria-label="线宽"><option>ByLayer</option></select>${caret}</div>
            </div>
          </div>
          <h2>特性</h2>
        </section>

        <section class="group g-clip">
          <div class="group-body">
            ${this.big(i.paste, "粘贴")}
            <div class="tools labels">
              ${this.tool(i.cut, "剪切", false, true)}${this.tool(i.copy, "复制", true, true)}${this.tool(i.match, "特性匹配", false, true)}
            </div>
          </div>
          <h2>剪切板</h2>
        </section>
      </header>

      <div class="work">
        <aside class="panel">
          <div class="panel-title">
            <svg width="10" height="10" viewBox="0 0 10 10"><path d="M.5 3h9L5 7.500z" fill="#666" /></svg>
            <svg width="8" height="10" viewBox="0 0 8 10" fill="none" stroke="#666"><path d="M2 .5h4.500M2.500 .5v5M5.500 .5v5M6.500 .5v5M.5 5.500h7M4 6v4" /></svg>
            <svg width="10" height="10" viewBox="0 0 10 10" stroke="#666" stroke-width="1.600"><path d="M1.500 1.500l7 7M8.500 1.500l-7 7" /></svg>
          </div>
          <div class="finder">
            <div class="pick"><select aria-label="对象"></select>${caret}</div>
            <button type="button" aria-label="清除选择">
              ${small(svg`<path d="M3 11l7-8.500 3 2L6 13z" fill="#f3bb55" stroke="#6b4a1a" stroke-width=".8"/><path d="M10 2.500l3 2 1-2-2.500-1.500z" fill="#c25a2c"/><path d="M1 14l2-3.500 2.500 2z" fill="#333"/><path d="M10 10l6 6M16 10l-6 6" stroke="#d01818" stroke-width="2"/>`)}
            </button>
            <button type="button" aria-label="快速选择">
              ${small(svg`<rect x="1.500" y="1.500" width="12" height="11" fill="#3f8be0" stroke="#17549c"/><path d="M5 4v10l3-3 2 4 2-1-2-4h4z" fill="#fff" stroke="#222" stroke-width=".8"/><path d="M15 8l-4 5h3l-2 4 5-5h-3l2-4z" fill="#ffb21a" stroke="#c07400" stroke-width=".5"/>`)}
            </button>
          </div>
          <div class="sheet">
            <table>
              <colgroup><col class="c-name" /><col /></colgroup>
              <thead><tr><th></th><th>特性值</th></tr></thead>
              <tbody>
                ${rows.map((r) => r.section
                  ? html`<tr><td colspan="2"></td></tr>`
                  : html`<tr><th scope="row"></th><td class="${r.tone ?? ""} ${typeof r.value === "string" && /[^\x00-\x7f]/.test(r.value) ? "cjk" : ""}">${r.value}</td></tr>`)}
              </tbody>
            </table>
            <div class="rest"></div>
          </div>
          <div class="describe"></div>
        </aside>
        <div class="splitter"></div>

        <main class="main">
          <div class="tabs">
            <div class="doc-tab"><span>孝感市孝昌县第二高级中学...结构图<span class="ext">.dwg</span></span>
              <button type="button" aria-label="关闭"><svg width="8" height="8" viewBox="0 0 8 8" stroke="#666" stroke-width="1.400"><path d="M.5 .5l7 7M7.500 .5l-7 7" /></svg></button>
            </div>
          </div>
          <plan-canvas></plan-canvas>
          <div class="layouts">
            <div class="steps">
              <button type="button" aria-label="第一个"><svg width="8" height="8" viewBox="0 0 8 8"><path d="M1 1h1v6H1zM7 1v6L3 4z" fill="#666" /></svg></button>
              <button type="button" aria-label="上一个"><svg width="8" height="8" viewBox="0 0 8 8"><path d="M6 1v6L2 4z" fill="#666" /></svg></button>
              <button type="button" aria-label="下一个"><svg width="8" height="8" viewBox="0 0 8 8"><path d="M2 1v6l4-3z" fill="#666" /></svg></button>
              <button type="button" aria-label="最后一个"><svg width="8" height="8" viewBox="0 0 8 8"><path d="M1 1v6l4-3zM6 1h1v6H6z" fill="#666" /></svg></button>
            </div>
            <a class="model" href="#"><svg width="48" height="15" viewBox="0 0 48 15"><path d="M0 0l8 14.500h32L47.500 0" fill="#fdfdfd" stroke="#999" /></svg><span>模型</span></a>
            <a class="paper" href="#"><svg width="54" height="15" viewBox="0 0 54 15" fill="none"><path d="M-4 8l4 6.500h38L47.500 0" stroke="#999" /></svg><span>布局1</span></a>
          </div>
        </main>
      </div>
      <footer class="foot"></footer>
    `;
  }
}
